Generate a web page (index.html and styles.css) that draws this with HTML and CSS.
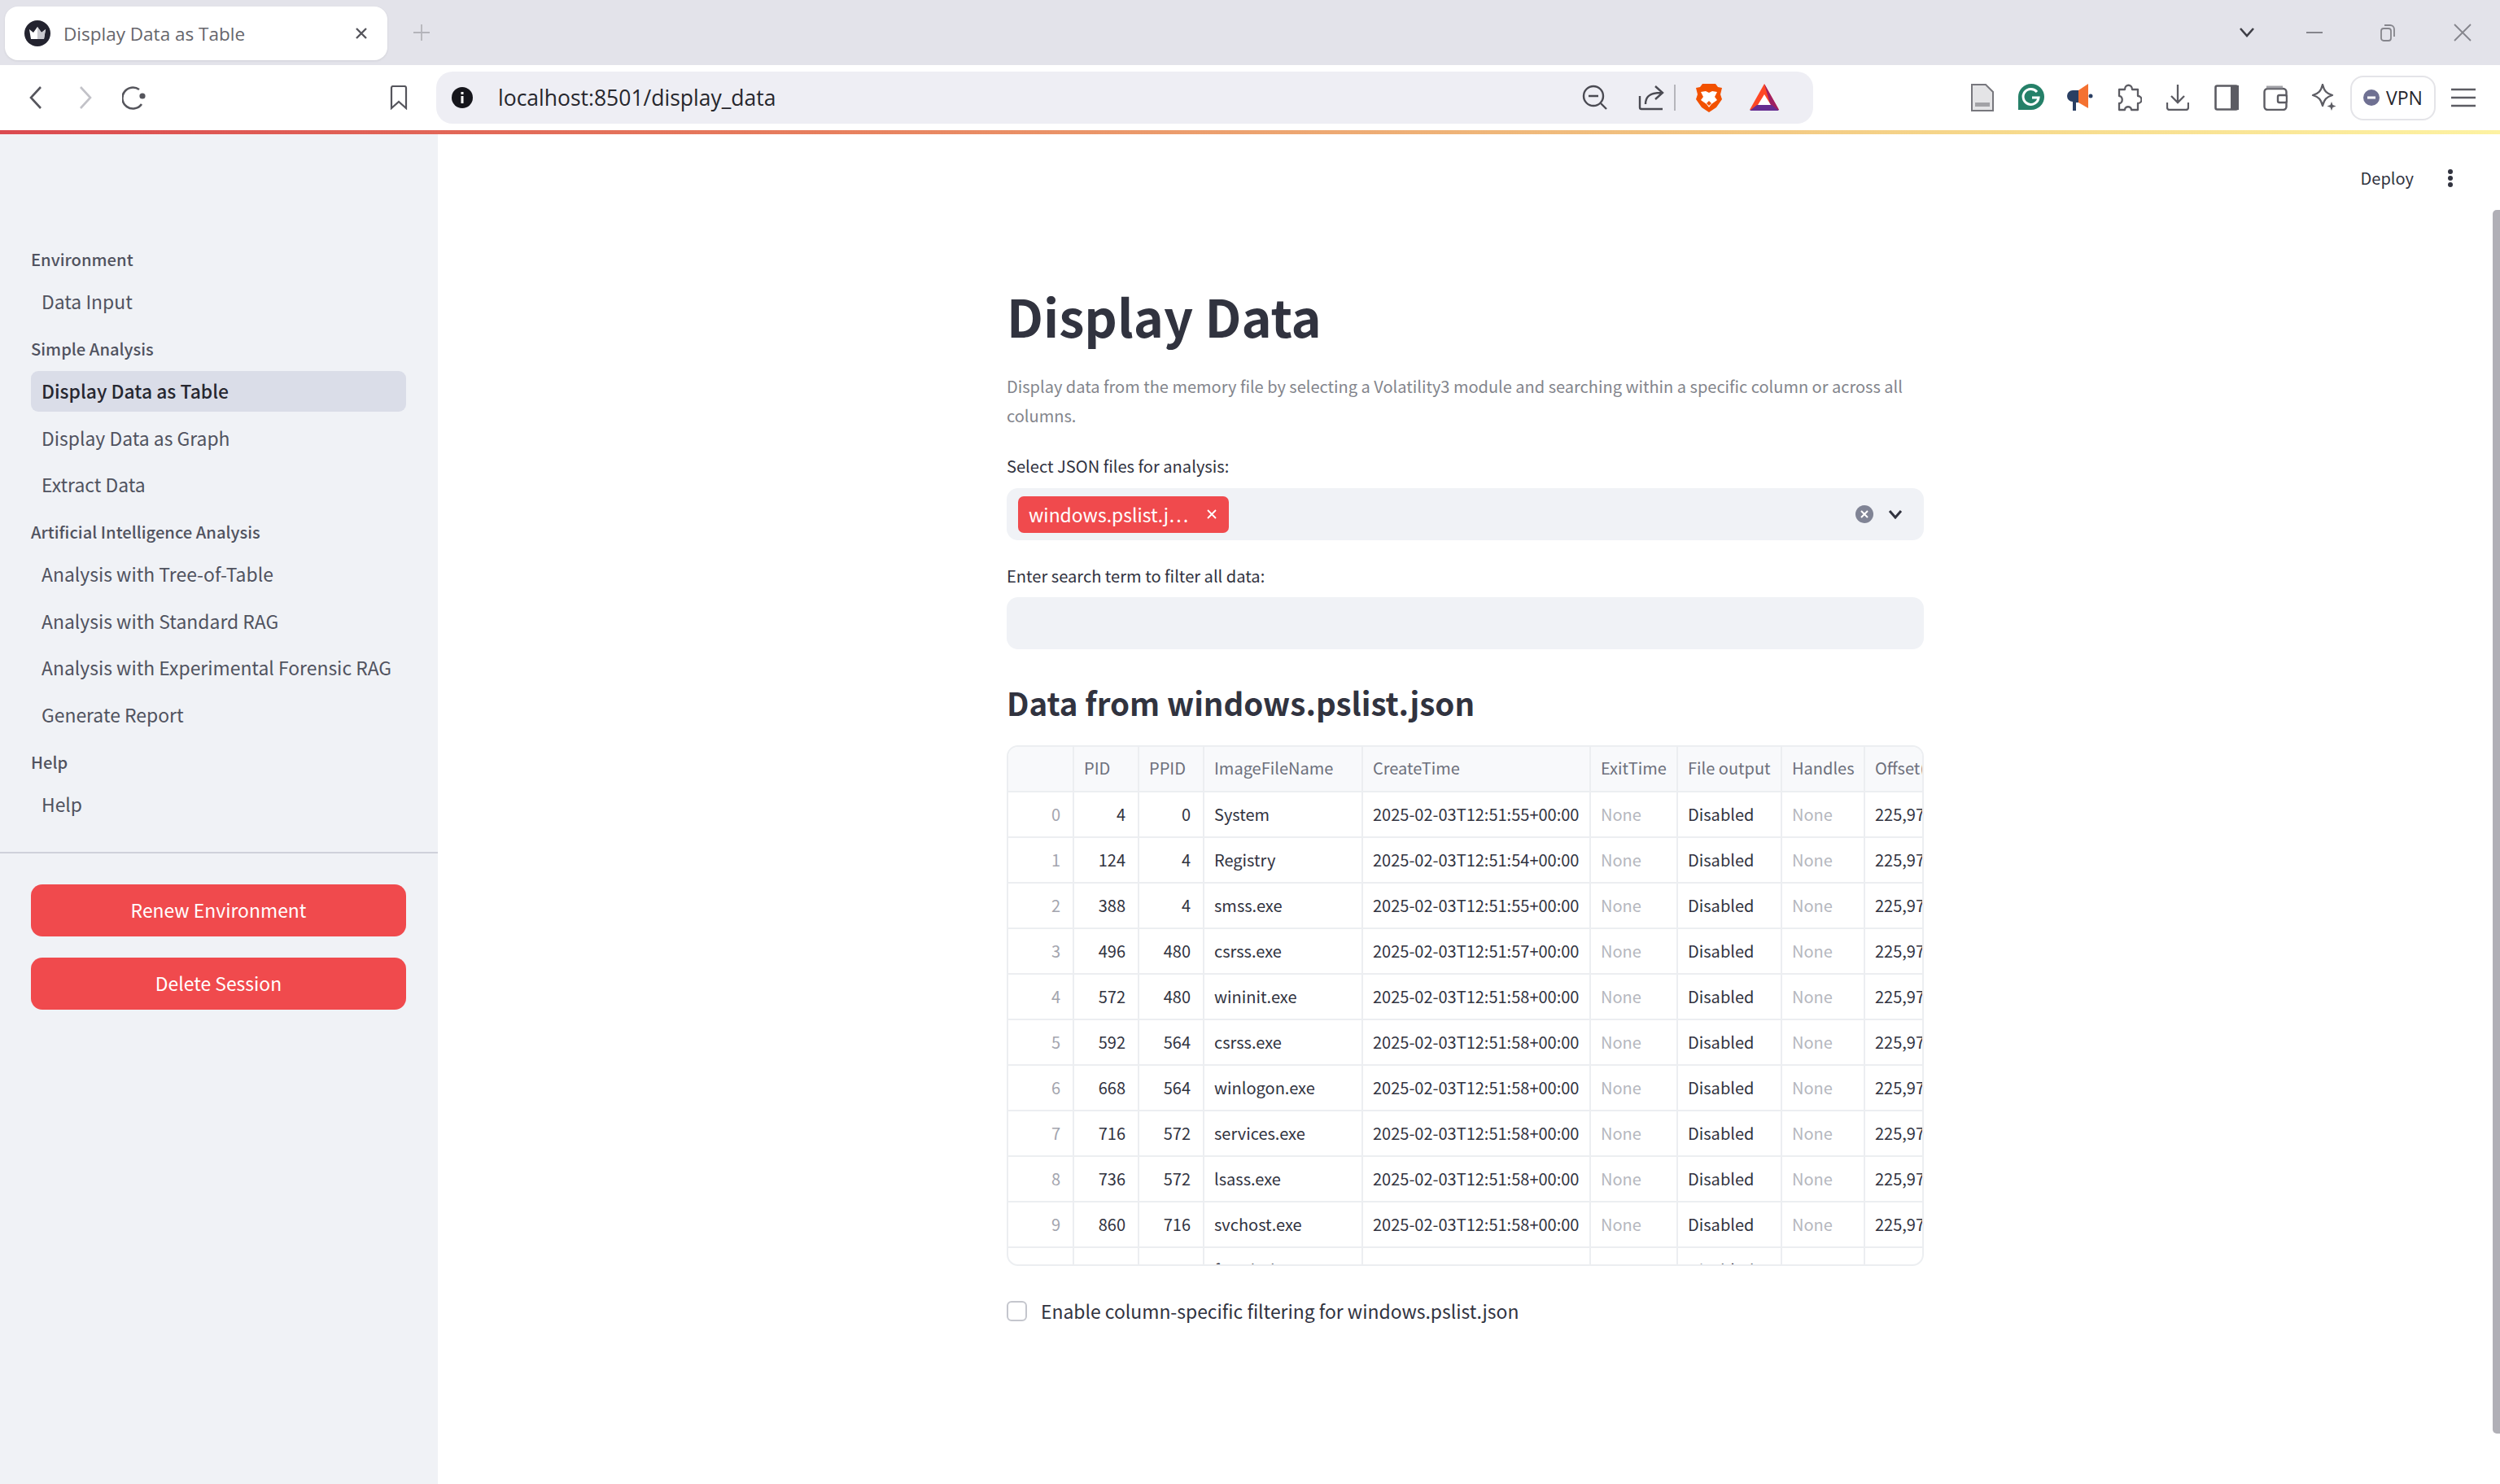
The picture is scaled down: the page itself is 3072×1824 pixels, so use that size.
FILE: index.html
```html
<!DOCTYPE html>
<html lang="en">
<head>
    <meta charset="UTF-8">
    <title>Display Data as Table</title>
    <link rel="stylesheet" href="styles.css">
</head>
<body>
    <div class="tab-strip">
        <div class="tab">
            <svg class="favicon" width="32" height="32" viewBox="0 0 32 32">
                <circle cx="16" cy="16" r="16" fill="#23232f"/>
                <path d="M6 11l5 4 5-7 5 7 5-4-2 12H8z" fill="#fff"/>
                <path d="M16 8l5 7 5-4-2 12h-8z" fill="#c9c9cf"/>
            </svg>
            <span class="tab-title">Display Data as Table</span>
            <svg width="16" height="16" viewBox="0 0 16 16"><path d="M2 2l12 12M14 2L2 14" stroke="#55555c" stroke-width="2.4" fill="none"/></svg>
        </div>
        <svg class="new-tab" width="20" height="20" viewBox="0 0 20 20"><path d="M10 0v20M0 10h20" stroke="#b4b4ba" stroke-width="1.8"/></svg>
        <div class="window-controls">
            <svg class="win-chevron" width="20" height="12" viewBox="0 0 20 12"><path d="M2 1l8 9 8-9" stroke="#3e3e46" stroke-width="2.6" fill="none"/></svg>
            <svg class="win-min" width="20" height="4" viewBox="0 0 20 4"><path d="M0 2h20" stroke="#85858c" stroke-width="2"/></svg>
            <svg class="win-restore" width="20" height="22" viewBox="0 0 20 22"><rect x="2" y="6" width="12" height="15" rx="3" stroke="#85858c" stroke-width="1.8" fill="none"/><path d="M6 2h7a5 5 0 0 1 5 5v9" stroke="#85858c" stroke-width="1.8" fill="none"/></svg>
            <svg class="win-close" width="22" height="22" viewBox="0 0 22 22"><path d="M1 1l20 20M21 1L1 21" stroke="#85858c" stroke-width="1.8"/></svg>
        </div>
    </div>

    <div class="toolbar">
        <div class="nav-buttons">
            <svg width="16" height="28" viewBox="0 0 16 28"><path d="M14 1L2 14l12 13" stroke="#55555c" stroke-width="2.6" fill="none"/></svg>
            <svg width="16" height="28" viewBox="0 0 16 28"><path d="M2 1l12 13L2 27" stroke="#c2c2c8" stroke-width="2.6" fill="none"/></svg>
            <svg class="reload" width="30" height="30" viewBox="0 0 30 30"><path d="M24 23a13 13 0 1 1-3-18" stroke="#55555c" stroke-width="2.6" fill="none"/><circle cx="25" cy="13" r="3.6" fill="#55555c"/></svg>
        </div>
        <svg class="bookmark" width="22" height="30" viewBox="0 0 22 30"><path d="M2 3a2 2 0 0 1 2-2h14a2 2 0 0 1 2 2v25l-9-8-9 8z" stroke="#55555c" stroke-width="2.2" fill="none"/></svg>
        <div class="url-bar">
            <svg width="26" height="26" viewBox="0 0 26 26"><circle cx="13" cy="13" r="13" fill="#16161c"/><rect x="11.5" y="11" width="3" height="9" fill="#fff"/><rect x="11.5" y="6" width="3" height="3" fill="#fff"/></svg>
            <span class="url-text">localhost:8501/display_data</span>
            <div class="url-icons">
                <svg width="32" height="32" viewBox="0 0 32 32"><circle cx="14" cy="14" r="12" stroke="#4a4a52" stroke-width="2.4" fill="none"/><path d="M8 14h12M23 23l7 7" stroke="#4a4a52" stroke-width="2.4" fill="none"/></svg>
                <svg class="url-share" width="32" height="32" viewBox="0 0 32 32"><path d="M2 14v14a2 2 0 0 0 2 2h26M9 24c0-10 6-14 19-14M21 2l9 8-9 8" stroke="#4a4a52" stroke-width="2.4" fill="none"/></svg>
                <span class="url-sep"></span>
                <svg class="url-brave" width="34" height="36" viewBox="0 0 34 36"><path d="M9 1h16l3 4 5 1-2 8 2 6-7 10-9 6-9-6-7-10 2-6-2-8 5-1z" fill="#f25100"/><path d="M7 11l6-1 4 2 4-2 6 1-3 6 3 4-7 5-3 4-3-4-7-5 3-4z" fill="#fff"/><path d="M14 25l3-3 3 3-3 3z" fill="#f25100"/></svg>
                <svg class="url-bat" width="36" height="34" viewBox="0 0 36 34"><path d="M18 0L0 32h36z" fill="#ff4724"/><path d="M18 0l18 32H27z" fill="#9e1f63"/><path d="M0 33l9-7h18l9 7z" fill="#662d91"/><path d="M18 13l8 13H10z" fill="#fff"/></svg>
            </div>
        </div>
        <div class="ext-icons">
            <svg width="30" height="34" viewBox="0 0 30 34"><path d="M2 1h17l9 9v23H2z" fill="#e4e4e6" stroke="#77777d" stroke-width="2"/><rect x="6" y="23" width="18" height="5" fill="#a2a2a6"/></svg>
            <svg width="32" height="34" viewBox="0 0 32 34"><path d="M16 0a16 16 0 0 1 0 32H0V16A16 16 0 0 1 16 0z" fill="#258068"/><path d="M23 10a9.5 9.5 0 1 0 2 7h-8" stroke="#fff" stroke-width="3" fill="none"/></svg>
            <svg width="32" height="36" viewBox="0 0 32 36"><path d="M0 16a7 7 0 0 1 7-7h7v15h-3v10H7V23a7 7 0 0 1-7-7z" fill="#2a3f63"/><path d="M14 9l12-8v30l-12-7z" fill="#f47130"/><circle cx="29" cy="16" r="2.5" fill="#2a3f63"/></svg>
            <svg width="32" height="34" viewBox="0 0 32 34"><path d="M11 7c0-7 9-7 9 0h7v8c6 0 6 9 0 9v8h-8c0-5-8-5-8 0H4v-8c5 0 5-9 0-9V7z" stroke="#5c5c63" stroke-width="2.3" fill="none" stroke-linejoin="round"/></svg>
            <svg width="28" height="32" viewBox="0 0 28 32"><path d="M14 0v22M6 14l8 8 8-8M1 22v6a3 3 0 0 0 3 3h20a3 3 0 0 0 3-3v-6" stroke="#5c5c63" stroke-width="2.3" fill="none"/></svg>
            <svg width="30" height="32" viewBox="0 0 30 32"><rect x="1.5" y="1.5" width="27" height="29" rx="2" stroke="#5c5c63" stroke-width="2.6" fill="none"/><rect x="20" y="1" width="10" height="30" fill="#5c5c63"/></svg>
            <svg width="30" height="32" viewBox="0 0 30 32"><rect x="1.5" y="5" width="27" height="26" rx="4" stroke="#5c5c63" stroke-width="2.4" fill="none"/><path d="M4 3h20" stroke="#a0a0a6" stroke-width="3"/><rect x="18" y="13" width="11" height="9" rx="2" fill="#fff" stroke="#5c5c63" stroke-width="2.4"/></svg>
            <svg width="32" height="34" viewBox="0 0 32 34"><path d="M14 1c2 8 5 11 12 13-7 2-10 5-12 13C12 19 9 16 2 14 9 12 12 9 14 1z" stroke="#5c5c63" stroke-width="2.3" fill="none" stroke-linejoin="round"/><path d="M25 22l1.5 4 4 1.5-4 1.5-1.5 4-1.5-4-4-1.5 4-1.5z" fill="#5c5c63"/></svg>
        </div>
        <div class="vpn-pill">
            <svg width="20" height="20" viewBox="0 0 20 20"><circle cx="10" cy="10" r="10" fill="#6f7092"/><rect x="5" y="8.5" width="10" height="3" fill="#fff"/></svg>
            <span>VPN</span>
        </div>
        <svg class="hamburger" width="30" height="24" viewBox="0 0 30 24"><path d="M0 2h30M0 12h30M0 22h30" stroke="#5c5c63" stroke-width="2.6"/></svg>
    </div>
    <div class="load-line"></div>

    <div class="app">
        <aside class="sidebar">
            <nav class="side-nav">
                <div class="nav-head">Environment</div>
                <a class="nav-item">Data Input</a>
                <div class="nav-head">Simple Analysis</div>
                <a class="nav-item active">Display Data as Table</a>
                <a class="nav-item">Display Data as Graph</a>
                <a class="nav-item">Extract Data</a>
                <div class="nav-head">Artificial Intelligence Analysis</div>
                <a class="nav-item">Analysis with Tree-of-Table</a>
                <a class="nav-item">Analysis with Standard RAG</a>
                <a class="nav-item">Analysis with Experimental Forensic RAG</a>
                <a class="nav-item">Generate Report</a>
                <div class="nav-head">Help</div>
                <a class="nav-item">Help</a>
            </nav>
            <div class="side-actions">
                <button class="red-btn">Renew Environment</button>
                <button class="red-btn">Delete Session</button>
            </div>
        </aside>

        <main class="main">
            <div class="top-actions">
                <span class="deploy">Deploy</span>
                <svg width="8" height="24" viewBox="0 0 8 24"><circle cx="4" cy="4" r="3" fill="#31333f"/><circle cx="4" cy="12" r="3" fill="#31333f"/><circle cx="4" cy="20" r="3" fill="#31333f"/></svg>
            </div>
            <div class="content">
                <h1>Display Data</h1>
                <p class="intro">Display data from the memory file by selecting a Volatility3 module and searching within a specific column or across all columns.</p>

                <label class="field-label">Select JSON files for analysis:</label>
                <div class="select-box">
                    <span class="chip">windows.pslist.j… <svg width="12" height="12" viewBox="0 0 12 12"><path d="M1 1l10 10M11 1L1 11" stroke="#fff" stroke-width="1.8"/></svg></span>
                    <svg class="clear-all" width="22" height="22" viewBox="0 0 22 22"><circle cx="11" cy="11" r="11" fill="#808495"/><path d="M7 7l8 8M15 7l-8 8" stroke="#fff" stroke-width="2"/></svg>
                    <svg class="caret" width="18" height="12" viewBox="0 0 18 12"><path d="M2 2l7 8 7-8" stroke="#31333f" stroke-width="3" fill="none"/></svg>
                </div>

                <label class="field-label">Enter search term to filter all data:</label>
                <div class="text-box"></div>

                <h2>Data from windows.pslist.json</h2>

                <div class="table-wrap">
                    <table class="data-table">
                        <colgroup>
                            <col class="c-idx"><col class="c-pid"><col class="c-pid"><col class="c-name"><col class="c-time"><col class="c-exit"><col class="c-file"><col class="c-handles"><col class="c-offset">
                        </colgroup>
                        <thead>
                            <tr><th></th><th>PID</th><th>PPID</th><th>ImageFileName</th><th>CreateTime</th><th>ExitTime</th><th>File output</th><th>Handles</th><th>Offset(V)</th></tr>
                        </thead>
                        <tbody>
                            <tr><td class="idx">0</td><td class="num">4</td><td class="num">0</td><td>System</td><td>2025-02-03T12:51:55+00:00</td><td class="none">None</td><td>Disabled</td><td class="none">None</td><td>225,975,000</td></tr>
                            <tr><td class="idx">1</td><td class="num">124</td><td class="num">4</td><td>Registry</td><td>2025-02-03T12:51:54+00:00</td><td class="none">None</td><td>Disabled</td><td class="none">None</td><td>225,975,000</td></tr>
                            <tr><td class="idx">2</td><td class="num">388</td><td class="num">4</td><td>smss.exe</td><td>2025-02-03T12:51:55+00:00</td><td class="none">None</td><td>Disabled</td><td class="none">None</td><td>225,975,000</td></tr>
                            <tr><td class="idx">3</td><td class="num">496</td><td class="num">480</td><td>csrss.exe</td><td>2025-02-03T12:51:57+00:00</td><td class="none">None</td><td>Disabled</td><td class="none">None</td><td>225,975,000</td></tr>
                            <tr><td class="idx">4</td><td class="num">572</td><td class="num">480</td><td>wininit.exe</td><td>2025-02-03T12:51:58+00:00</td><td class="none">None</td><td>Disabled</td><td class="none">None</td><td>225,975,000</td></tr>
                            <tr><td class="idx">5</td><td class="num">592</td><td class="num">564</td><td>csrss.exe</td><td>2025-02-03T12:51:58+00:00</td><td class="none">None</td><td>Disabled</td><td class="none">None</td><td>225,975,000</td></tr>
                            <tr><td class="idx">6</td><td class="num">668</td><td class="num">564</td><td>winlogon.exe</td><td>2025-02-03T12:51:58+00:00</td><td class="none">None</td><td>Disabled</td><td class="none">None</td><td>225,975,000</td></tr>
                            <tr><td class="idx">7</td><td class="num">716</td><td class="num">572</td><td>services.exe</td><td>2025-02-03T12:51:58+00:00</td><td class="none">None</td><td>Disabled</td><td class="none">None</td><td>225,975,000</td></tr>
                            <tr><td class="idx">8</td><td class="num">736</td><td class="num">572</td><td>lsass.exe</td><td>2025-02-03T12:51:58+00:00</td><td class="none">None</td><td>Disabled</td><td class="none">None</td><td>225,975,000</td></tr>
                            <tr><td class="idx">9</td><td class="num">860</td><td class="num">716</td><td>svchost.exe</td><td>2025-02-03T12:51:58+00:00</td><td class="none">None</td><td>Disabled</td><td class="none">None</td><td>225,975,000</td></tr>
                            <tr><td class="idx">10</td><td class="num">888</td><td class="num">860</td><td>fontdrvhost.exe</td><td>2025-02-03T12:51:59+00:00</td><td class="none">None</td><td>Disabled</td><td class="none">None</td><td>225,975,000</td></tr>
                        </tbody>
                    </table>
                </div>

                <div class="check-row">
                    <span class="check-box"></span>
                    <span>Enable column-specific filtering for windows.pslist.json</span>
                </div>
            </div>
            <div class="scroll-thumb"></div>
        </main>
    </div>
</body>
</html>
```
FILE: styles.css
```css
* {
    box-sizing: border-box;
}
html, body {
    margin: 0;
    height: 100%;
}
body {
    width: 3072px;
    height: 1824px;
    overflow: hidden;
    display: flex;
    flex-direction: column;
    background: #fff;
    font-family: "Noto Sans CJK SC", "Source Sans Pro", sans-serif;
    color: #31333f;
}

/* browser chrome */
.tab-strip {
    height: 80px;
    flex: none;
    display: flex;
    align-items: flex-start;
    background: #e3e3ea;
    padding: 8px 0 0 6px;
    font-family: "Open Sans", sans-serif;
}
.tab {
    width: 470px;
    height: 66px;
    display: flex;
    align-items: center;
    padding: 0 24px 0 24px;
    background: #fff;
    border-radius: 16px;
    box-shadow: 0 1px 3px rgba(0,0,0,0.08);
}
.tab-title {
    flex: 1;
    margin-left: 16px;
    font-size: 22.5px;
    color: #66666c;
}
.new-tab {
    margin: 22px 0 0 32px;
}
.window-controls {
    margin-left: auto;
    position: relative;
    width: 400px;
    height: 60px;
}
.window-controls svg {
    position: absolute;
}
.win-chevron { left: 79px; top: 26px; }
.win-min { left: 162px; top: 30px; }
.win-restore { left: 252px; top: 21px; }
.win-close { left: 343px; top: 21px; }

.toolbar {
    height: 80px;
    flex: none;
    display: flex;
    align-items: center;
    background: #fff;
    font-family: "Open Sans", sans-serif;
}
.nav-buttons {
    width: 479px;
    padding-left: 36px;
    display: flex;
    align-items: center;
    gap: 45px;
}
.reload {
    margin-left: -8px;
}
.bookmark {
    flex: none;
}
.url-bar {
    width: 1692px;
    height: 64px;
    margin-left: 35px;
    padding-left: 19px;
    display: flex;
    align-items: center;
    background: #eeeef4;
    border-radius: 20px;
}
.url-text {
    margin-left: 31px;
    font-size: 26.5px;
    color: #26262c;
}
.url-icons {
    margin-left: auto;
    padding-right: 42px;
    display: flex;
    align-items: center;
}
.url-share { margin-left: 37px; }
.url-sep {
    width: 2px;
    height: 32px;
    margin: 0 24px 0 12px;
    background: #b5b5bb;
}
.url-bat { margin-left: 33px; }
.ext-icons {
    width: 660px;
    padding-left: 178px;
    display: grid;
    grid-template-columns: repeat(8, 60px);
    justify-items: center;
    align-items: center;
    flex: none;
}
.vpn-pill {
    width: 105px;
    height: 55px;
    display: flex;
    align-items: center;
    justify-content: center;
    gap: 8px;
    border: 2px solid #e4e4e8;
    border-radius: 16px;
    font-size: 23px;
    color: #26262c;
}
.hamburger {
    margin-left: 19px;
}
.load-line {
    height: 5px;
    flex: none;
    background: linear-gradient(90deg, #db4a50 0%, #e77f5e 33%, #efb77a 60%, #f6d98c 80%, #fdf2a2 100%);
}

/* streamlit app */
.app {
    flex: 1;
    display: flex;
    min-height: 0;
}
.sidebar {
    width: 538px;
    flex: none;
    background: #f0f2f6;
    padding-top: 135px;
}
.side-nav {
    padding: 0 39px 33px 38px;
    border-bottom: 2px solid #cfd1da;
}
.nav-head {
    height: 38px;
    margin: 14px 0 8px;
    line-height: 38px;
    font-size: 20.2px;
    font-weight: 500;
    color: #50535f;
}
.nav-head:first-child {
    margin-top: 0;
}
.nav-item {
    display: block;
    height: 50px;
    margin-bottom: 7.5px;
    padding: 0 13px;
    line-height: 48px;
    font-size: 22.9px;
    color: #50535f;
    border-radius: 9px;
    white-space: nowrap;
}
.nav-item:last-child {
    margin-bottom: 0;
}
.nav-item.active {
    background: #dadde8;
    color: #262730;
    font-weight: 500;
}
.side-actions {
    padding: 38px 39px 0 38px;
    display: flex;
    flex-direction: column;
    gap: 26px;
}
.red-btn {
    height: 64px;
    border: none;
    border-radius: 14px;
    background: #f04a4d;
    color: #fff;
    font-family: inherit;
    font-size: 22.9px;
    padding-bottom: 3px;
}

.main {
    flex: 1;
    position: relative;
}
.top-actions {
    position: absolute;
    top: 39px;
    right: 57px;
    display: flex;
    align-items: center;
    gap: 41px;
    font-size: 20px;
}
.content {
    width: 1127px;
    margin-left: 699px;
    padding-top: 182px;
}
h1 {
    margin: 0;
    height: 82px;
    line-height: 82px;
    font-size: 63px;
    font-weight: 700;
    color: #31333f;
}
.intro {
    margin: 28px 0 0;
    font-size: 20px;
    line-height: 36px;
    color: #83858c;
}
.field-label {
    display: block;
    margin-top: 26px;
    height: 36px;
    line-height: 36px;
    font-size: 20.1px;
    color: #31333f;
}
.select-box {
    margin-top: 9px;
    height: 64px;
    display: flex;
    align-items: center;
    padding: 0 26px 0 14px;
    background: #f0f2f6;
    border-radius: 14px;
}
.chip {
    width: 259px;
    height: 45px;
    display: flex;
    align-items: center;
    justify-content: space-between;
    padding: 0 15px 0 13px;
    background: #f04a4d;
    color: #fff;
    border-radius: 7px;
    font-size: 22.9px;
    white-space: nowrap;
}
.clear-all {
    margin-left: auto;
}
.caret {
    margin-left: 18px;
}
.text-box {
    margin-top: 8px;
    height: 64px;
    background: #f0f2f6;
    border-radius: 14px;
}
h2 {
    margin: 40px 0 0;
    height: 52px;
    line-height: 50px;
    font-size: 38.5px;
    font-weight: 600;
    color: #31333f;
}
.table-wrap {
    margin-top: 26px;
    height: 640px;
    overflow: hidden;
    border: 2px solid #eceef1;
    border-radius: 14px;
}
.data-table {
    width: 1234px;
    table-layout: fixed;
    border-collapse: collapse;
    font-size: 20px;
}
.c-idx { width: 80px; }
.c-pid { width: 80px; }
.c-name { width: 195px; }
.c-time { width: 280px; }
.c-exit { width: 107px; }
.c-file { width: 128px; }
.c-handles { width: 102px; }
.c-offset { width: 182px; }
.data-table th, .data-table td {
    height: 56px;
    padding: 0 12px 2px;
    border-right: 2px solid #eceef1;
    border-bottom: 2px solid #eceef1;
    white-space: nowrap;
    overflow: hidden;
    text-align: left;
}
.data-table th {
    height: 55px;
    padding-bottom: 3px;
    background: #f8f9fb;
    color: #6d707c;
    font-weight: 400;
}
.data-table .num, .data-table .idx {
    text-align: right;
    padding-right: 15px;
}
.data-table .idx {
    color: #a3a5ae;
}
.data-table .none {
    color: #b5b7be;
}
.check-row {
    margin-top: 38px;
    height: 34px;
    line-height: 34px;
    display: flex;
    align-items: center;
    gap: 17px;
    font-size: 22.9px;
    color: #31333f;
}
.check-box {
    width: 25px;
    height: 25px;
    background: #fff;
    border: 2px solid #c4c6cd;
    border-radius: 6px;
}
.scroll-thumb {
    position: absolute;
    top: 93px;
    right: 0;
    width: 9px;
    height: 1504px;
    background: #b0afb6;
    border-radius: 5px 0 0 5px;
}
```
